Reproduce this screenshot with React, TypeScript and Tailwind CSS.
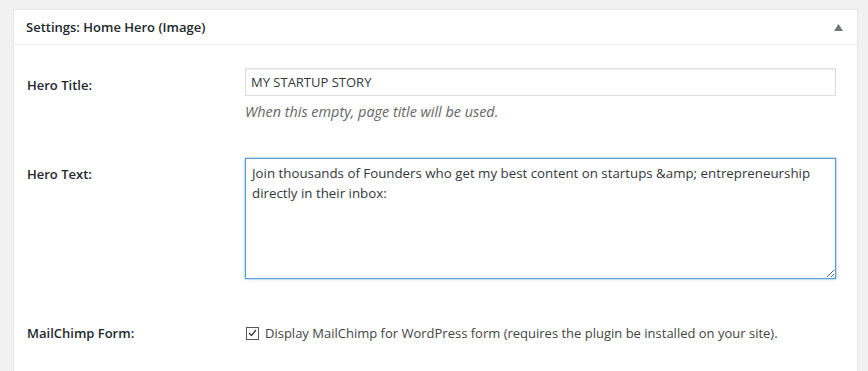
import { useState } from 'react';

const font = "font-['Open_Sans','Noto_Sans',sans-serif]";

function Row({
  label,
  children,
  className,
  labelClass,
}: {
  label: string;
  children: React.ReactNode;
  className?: string;
  labelClass?: string;
}) {
  return (
    <div className={`flex ${className ?? ''}`}>
      <div className={`w-[231px] shrink-0 pl-[13px] text-[13px] font-semibold text-[#23282d] ${labelClass ?? ''}`}>
        {label}
      </div>
      <div className="flex-1 pr-[21px]">{children}</div>
    </div>
  );
}

export default function App() {
  const [title, setTitle] = useState('MY STARTUP STORY');
  const [text, setText] = useState(
    'Join thousands of Founders who get my best content on startups &amp; entrepreneurship directly in their inbox:'
  );
  const [mailchimp, setMailchimp] = useState(true);

  return (
    <div className={`h-[371px] bg-[#f1f1f1] pl-[13px] pr-[10px] pt-[9px] ${font}`}>
      <div className="h-[362px] border border-b-0 border-[#e5e5e5] bg-white">
        {/* header */}
        <div className="flex h-[35px] items-center justify-between border-b border-[#eee] pl-[12px] pr-[14px] pt-[2px]">
          <h2 className="text-[13px] font-semibold text-[#23282d]">Settings: Home Hero (Image)</h2>
          <svg width="9" height="7" viewBox="0 0 9 7" className="mb-[2px]">
            <polygon points="4.5,0 9,7 0,7" fill="#72777c" />
          </svg>
        </div>

        <Row label="Hero Title:" className="mt-[23px] items-start" labelClass="pt-[8px]">
          <input
            value={title}
            onChange={(e) => setTitle(e.target.value)}
            className="block h-[28px] w-full border border-[#ddd] px-[5px] text-[13px] text-[#32373c] shadow-[inset_0_1px_2px_rgba(0,0,0,0.07)] outline-none"
          />
          <p className="mt-[5px] text-[14.4px] italic text-[#666]">When this empty, page title will be used.</p>
        </Row>

        <Row label="Hero Text:" className="mt-[35px] items-start" labelClass="pt-[7px]">
          <textarea
            value={text}
            onChange={(e) => setText(e.target.value)}
            className="block h-[121px] w-full resize-y border border-[#5b9dd9] px-[6px] py-[4px] text-[13.3px] leading-[20px] text-[#32373c] shadow-[0_0_2px_rgba(30,140,190,0.8)] outline-none"
          />
        </Row>

        <Row label="MailChimp Form:" className="mt-[45px] items-center">
          <label className="flex items-center gap-[6px] text-[13px] text-[#444]">
            <input
              type="checkbox"
              checked={mailchimp}
              onChange={(e) => setMailchimp(e.target.checked)}
              className="sr-only"
            />
            <span className="ml-[1px] flex h-[13px] w-[13px] items-center justify-center border border-[#555] bg-white">
              {mailchimp && (
                <svg width="9" height="8" viewBox="0 0 9 8">
                  <path d="M1 4 L3.5 6.5 L8 1" fill="none" stroke="#333" strokeWidth="1.2" />
                </svg>
              )}
            </span>
            Display MailChimp for WordPress form (requires the plugin be installed on your site).
          </label>
        </Row>
      </div>
    </div>
  );
}
